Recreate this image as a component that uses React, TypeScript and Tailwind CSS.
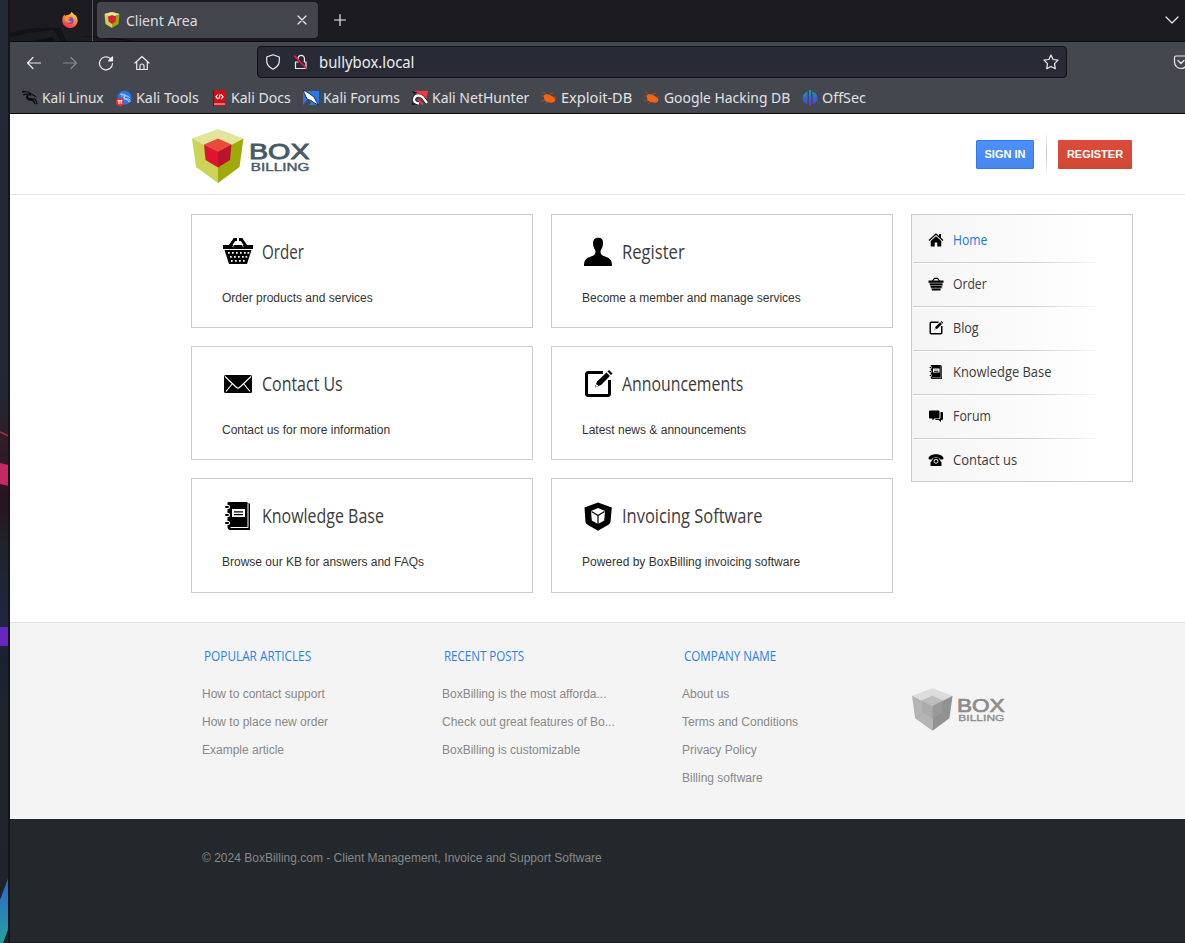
import { useLayoutEffect, useRef, useState } from "react";
import type { ReactNode } from "react";

/* Text condensed or widened horizontally so that it fills a given width. */
function Fit({ w, className = "", children }: { w: number; className?: string; children: ReactNode }) {
  const ref = useRef<HTMLSpanElement>(null);
  const [scale, setScale] = useState(1);
  useLayoutEffect(() => {
    if (ref.current) setScale(w / ref.current.offsetWidth);
  }, [w]);
  return (
    <span className="block shrink-0 whitespace-nowrap" style={{ width: w }}>
      <span ref={ref} className={"inline-block origin-left whitespace-nowrap align-top " + className} style={{ transform: `scaleX(${scale})` }}>
        {children}
      </span>
    </span>
  );
}

const glyphs: Record<string, ReactNode> = {
  basket: (
    <>
      <path d="M1 9h30v4H1zM2.500 14h27L25 28H7z" />
      <path d="M8 10 12.500 3.500h2.500M24 10l-4.500-6.500H17" fill="none" stroke="#000" strokeWidth="3" />
      <path d="M10.500 11l4.500-6M21.500 11 17 5" stroke="#fff" strokeWidth=".8" />
      <g fill="#fff">
        {[6, 10, 14, 18, 22, 25.500].map((x) => <path key={x} d={`M${x} 16h1.700v1.700h-1.700z`} />)}
        {[8, 12, 16, 20, 23.500].map((x) => <path key={x} d={`M${x} 20h1.700v1.700h-1.700z`} />)}
        {[9, 13, 17, 21].map((x) => <path key={x} d={`M${x} 24h1.700v1.700h-1.700z`} />)}
      </g>
    </>
  ),
  basketSmall: (
    <>
      <path d="M1 9h30v4.500H1zM3 15h26v3.500H4zM5 20h22v3.500H6zM7 25h18v4H8z" />
      <path d="M3 13h26v12H6z" opacity=".35" />
      <path d="M9 10 13 4.500h6l4 5.500" fill="none" stroke="#000" strokeWidth="2.500" />
    </>
  ),
  user: <path d="M12.500 3C14.500 1.300 18.500 1.600 20 3.300c1.600 1.900 1.200 5.800.2 8.200-.7 1.700-1.700 2.700-1.700 4.300 0 3 1.800 3.700 4.600 4.700C28 22.200 30 24 30 30H2c0-6 2-7.800 6.900-9.500 2.800-1 4.600-1.700 4.600-4.700 0-1.600-1-2.600-1.700-4.300C10.800 9 10.600 5 12.500 3z" />,
  mail: (
    <>
      <rect x="2" y="7" width="28" height="18" rx="1.500" />
      <path d="m3 8.500 11.500 11q1.500 1.300 3 0L29 8.500M4 23.500l6.500-8M28 23.500l-6.500-8" stroke="#fff" strokeWidth="1.100" fill="none" />
    </>
  ),
  edit: (
    <>
      <path d="M21 4.500H6.500a2 2 0 0 0-2 2v19a2 2 0 0 0 2 2h19a2 2 0 0 0 2-2V12" fill="none" stroke="#000" strokeWidth="3" />
      <path d="m13 19.500 2-6L24.500 4.500l3.500 3.500L19 17zM25.500 3.500 27 2l3.500 3.500L29 7z" />
      <path d="m13.500 19 1-3 2 2z" fill="#fff" />
    </>
  ),
  book: (
    <>
      <path d="M5.500 3Q5.500 2 6.500 2h19v1.500H28V30H7.500q-2-.5-2-3z" />
      <path d="M26 4v23.500H8.500" fill="none" stroke="#fff" strokeWidth="1" />
      <path d="M10 9h13v8H10z" fill="#fff" />
      <path d="M12 11.300h9v1.300h-9zM12 14h9v1.300h-9z" />
      {[7, 15, 23].map((y) => (
        <g key={y}>
          <rect x="3" y={y - 2} width="5" height="4" rx="1.800" fill="#fff" />
          <rect x="3" y={y - 1} width="4" height="2" rx="1" />
        </g>
      ))}
    </>
  ),
  shield: (
    <>
      <path d="M16 2.500 2.500 7.500 3.500 22Q4 24 6 25l10 5.700L26 25q2-1 2.500-3l1.300-14.500z" />
      <path d="m16 8-7 3 .8 9.500L16 24l6.200-3.500.8-9.500z" fill="#fff" />
      <path d="m9.500 11.500 6.500 4 6.500-4M16 15.500V24" fill="none" stroke="#000" strokeWidth="1.200" />
    </>
  ),
  home: (
    <>
      <path d="M16 8.500 5.500 18v11h8v-8h5v8h8V18zM22 4h4v9l-4-4z" />
      <path d="m2 17 14-13 14 13" fill="none" stroke="#000" strokeWidth="2.500" />
    </>
  ),
  forum: (
    <>
      <path d="M4 5h17q2 0 2 2v12q0 2-2 2h-8l-4 4v-4H4q-2 0-2-2V7q0-2 2-2z" />
      <path d="M25 8h3q2 0 2 2v12q0 2-2 2h-2v4l-5-4h-7l2-2h6q3 0 3-3z" />
    </>
  ),
  phone: (
    <>
      <path d="M3 15q-2 0-2-2.500C2 7 9 4.500 16 4.500S30 7 31 12.500q0 2.500-2 2.500h-4q-2 0-2-3-7-2-14 0 0 3-2 3z" />
      <path d="M11 12h10l6 9v7H5v-7z" />
      <circle cx="16" cy="18.500" r="4" fill="none" stroke="#fff" strokeWidth="1.800" />
    </>
  ),
};

function Glyph({ name, className }: { name: string; className: string }) {
  return <svg viewBox="0 0 32 32" className={"shrink-0 " + className}>{glyphs[name]}</svg>;
}

function Logo({ gray = false, className }: { gray?: boolean; className: string }) {
  const c = gray
    ? ["#dcdcdc", "#b4b4b4", "#929292", "#bdbdbd", "#ababab", "#999999", "#8c8c8c"]
    : ["#e3e69a", "#cbd457", "#9fa90b", "#e64c39", "#e21330", "#bb1329", "#465b66"];
  return (
    <svg viewBox="0 0 118 54" className={"shrink-0 " + className}>
      <path d="M26 0 0 9.500 26 23 51.500 9.500z" fill={c[0]} />
      <path d="m0 9.500 4 28.500 22 16V23z" fill={c[1]} />
      <path d="m51.500 9.500-4 28.500L26 54V23z" fill={c[2]} />
      <path d="m26 9.500-14 6L26 22.500l13.500-7z" fill={c[3]} />
      <path d="m12 15.500 1.500 15.500L26 38.500v-16z" fill={c[4]} />
      <path d="m39.500 15.500-1.500 15.500L26 38.500v-16z" fill={c[5]} />
      <g fill={c[6]} stroke={c[6]} fontFamily="Liberation Sans, sans-serif">
        <text x="57" y="30.300" fontSize="22.500" strokeWidth=".9" textLength="60.500" lengthAdjust="spacingAndGlyphs">BOX</text>
        <text x="58.800" y="41.500" fontSize="10.700" strokeWidth=".4" textLength="58.500" lengthAdjust="spacingAndGlyphs">BILLING</text>
      </g>
    </svg>
  );
}

function ShieldFavicon() {
  return (
    <svg viewBox="0 0 16 16" className="size-4 shrink-0">
      <path d="M8 0 .5 2l1 10L8 16z" fill="#cbd34f" />
      <path d="m8 0 7.500 2-1 10L8 16z" fill="#9aa60d" />
      <path d="M8 0 .5 2 8 5l7.500-3z" fill="#e5e795" />
      <path d="M8 3 4 4.500l.5 5L8 12l3.500-2.500.5-5z" fill="#dc2034" />
    </svg>
  );
}

function Firefox() {
  return (
    <svg viewBox="0 0 16 16" className="size-4 shrink-0">
      <defs>
        <linearGradient id="fx" x1=".8" y1="0" x2=".3" y2="1">
          <stop offset="0" stopColor="#ffe33d" />
          <stop offset=".45" stopColor="#ff9029" />
          <stop offset="1" stopColor="#f7235f" />
        </linearGradient>
      </defs>
      <path d="M9.300 0q2 1 3 3l.5-.4q2.900 2.500 2.900 6A7.700 7.300 0 0 1 .3 9Q0 5 2.300 2.500L3 4q1-1 2.500-1Q8.500 3 9.300 0z" fill="url(#fx)" />
      <circle cx="8" cy="8.500" r="3.600" fill="#7643e4" />
      <path d="M3 4.500q2.500-.8 3.500.8 1 .5 2 .5-.5 1.500-2.500 2 1 2 4 1-2 3-5 1.500T3 4.500z" fill="#ff9830" />
    </svg>
  );
}

const dragon = (
  <g fill="none" strokeWidth="1.300">
    <path d="M0 2q6-1.500 9 2M1 5q3-1.500 6-.5l2 1M8 3.500q-5 3-1 5 3 .5 6 .7 2 2 1.700 5M5 6q-1 4 4 4 3 0 4 4M9 4l3 1.500 2 1.500M0 2l2-1" />
  </g>
);

const favs: Record<string, ReactNode> = {
  linux: <g stroke="#0d0d0f">{dragon}</g>,
  tools: (
    <>
      <circle cx="8.500" cy="7.800" r="7" fill="#2676f0" />
      <g stroke="#c9e0ff" transform="translate(4.500 3) scale(.65)">{dragon}</g>
      <circle cx="4" cy="12" r="4" fill="#ee2e35" />
      <path d="M1.500 10.800h5M3 10.500v3.500M5.200 10.500v3.500" stroke="#fff" />
    </>
  ),
  docs: (
    <>
      <path d="M2.500 0H14v16H2.500z" fill="#d40e16" />
      <path d="M2.500 0v16" stroke="#26264f" />
      <path d="M3 13.500h11v1H3z" fill="#ddd" />
      <path d="M6.800 4.500 5 6.800l1.800 2.200M10.200 4.500 12 6.800 10.200 9M7.800 9l1.400-4.500" stroke="#fff" strokeWidth="1.200" fill="none" />
    </>
  ),
  forums: (
    <>
      <path d="M0 1h16v14H0z" fill="#2577ee" />
      <path d="M0 0 3 1.500 7 4l4 3 2 4 2.500 4-4-2L8 10.500 4 9z" fill="#fff" stroke="#111" strokeWidth=".8" />
      <path d="M0 15 5 9l3 3-2 3z" fill="#44474e" />
    </>
  ),
  nethunter: (
    <>
      <path d="M2 1h14l-2.500 11L5 6z" fill="#ff3540" />
      <path d="M7 13.500q-5-.5-5-4Q2.500 5.500 6.500 5.500q2.500 0 4.500 2l4 5.500" fill="none" stroke="#111" strokeWidth="3.500" />
      <path d="M7 13.500q-5-.5-5-4Q2.500 5.500 6.500 5.500q2.500 0 4.500 2l4 5.500" fill="none" stroke="#fff" strokeWidth="2.300" />
      <path d="m6 9.500 5 5" stroke="#e8344a" strokeWidth="2" />
      <path d="M0 1l6 1.500L2 4zM0 12v3h3z" fill="#15151a" />
    </>
  ),
  bug: (
    <>
      <path d="m2.500 6 2-2 3 .5L11 6l3.500 3-1 3-3 .8-4-.8-3-1.500z" fill="#f26414" />
      <path d="M4 3 1 2.500M8 4.500l4-1.500M3 10l-3 1M7 12l-3 1.500M0 6h3M13 7h2.500" stroke="#b95622" strokeWidth=".7" />
    </>
  ),
  offsec: (
    <>
      <defs>
        <linearGradient id="off" gradientUnits="userSpaceOnUse" x1="0" y1="0" x2="0" y2="16">
          <stop offset="0" stopColor="#10a0bd" />
          <stop offset=".5" stopColor="#3167ce" />
          <stop offset="1" stopColor="#6635d4" />
        </linearGradient>
      </defs>
      <path d="M5.500 1.500v13Q.5 12.500.5 8t5-6.500zM7 0h2v16H7zM10.500 1.500v13q5-2 5-6.500t-5-6.500z" fill="url(#off)" />
    </>
  ),
};

const bookmarks: [string, string, number, string][] = [
  ["linux", "Kali Linux", 62, "w-[94px]"],
  ["tools", "Kali Tools", 63, "w-[95px]"],
  ["docs", "Kali Docs", 60, "w-[92px]"],
  ["forums", "Kali Forums", 77, "w-[109px]"],
  ["nethunter", "Kali NetHunter", 97, "w-[129px]"],
  ["bug", "Exploit-DB", 71, "w-[103px]"],
  ["bug", "Google Hacking DB", 126, "w-[158px]"],
  ["offsec", "OffSec", 44, "w-[70px]"],
];

const line = { fill: "none", stroke: "#ececee", strokeWidth: 1.2, strokeLinecap: "round", strokeLinejoin: "round" } as const;

function Browser() {
  return (
    <div className="h-[114px] w-full overflow-hidden border-b border-[#08080c] bg-[#44474e] font-['Noto_Sans',sans-serif] text-[#ececee]">
      <div className="relative flex h-[42px] border-b border-[#0e0e12] bg-[#1b1b20]">
        <svg className="absolute left-0 top-0 h-[41px] w-40" viewBox="0 0 160 41">
          <path d="M0 33Q20 27 50 28l7 14H0z" fill="#121217" />
          <path d="M0 37q20-5 44-7l7 12H0z" fill="#1a1a1f" />
          <path d="m18 42 24-5 4 5zM70 36q30 0 60 6" fill="#101014" />
        </svg>
        <div className="relative flex w-[83px] items-center border-r border-[#56565b] pl-[52px] pb-px"><Firefox /></div>
        <div className="relative ml-1 mt-[2px] flex h-9 w-[221px] items-center rounded-[4px] bg-[#42454c] pl-[7px] shadow-sm">
          <ShieldFavicon />
          <div className="ml-[6px] w-[170px] pt-px text-[15px] text-[#dedee0]"><Fit w={72}>Client Area</Fit></div>
          <svg viewBox="0 0 12 12" className="size-3" {...line}><path d="m2 2 8 8M10 2l-8 8" /></svg>
        </div>
        <svg viewBox="0 0 14 14" className="ml-[15px] mt-[13px] size-[14px]" {...line}><path d="M7 1.500v11M1.500 7h11" /></svg>
        <svg viewBox="0 0 14 10" className="ml-auto mr-[6px] mt-[15px] h-[10px] w-[14px]" {...line}><path d="m1 2 6 6 6-6" /></svg>
      </div>
      <div className="flex h-10 items-center">
        <svg viewBox="0 0 16 16" className="ml-4 mt-px size-4 shrink-0" {...line}><path d="M1.500 8h13M7 2.500 1.500 8 7 13.500" /></svg>
        <svg viewBox="0 0 16 16" className="ml-5 mt-px size-4 shrink-0 opacity-40" {...line}><path d="M1.500 8h13M9 2.500 14.500 8 9 13.500" /></svg>
        <svg viewBox="0 0 16 16" className="ml-5 mt-px size-4 shrink-0" {...line}><path d="M14.500 8.700A6.500 6.500 0 1 1 12 3.200L14 5" /><path d="M14.500 2v4h-4z" fill="#f4f4f6" /></svg>
        <svg viewBox="0 0 16 16" className="ml-5 mt-px size-4 shrink-0" {...line}><path d="m1 8 7-6.500L15 8M2.700 7v7.500h10.600V7M6 14v-3.500q0-1.500 2-1.500t2 1.500V14" /></svg>
        <div className="ml-[107px] flex h-8 w-[810px] shrink-0 items-center rounded-[4px] border border-[#101016] bg-[#282a36] pl-[7px]">
          <svg viewBox="0 0 16 16" className="size-4" {...line}><path d="M8 .8 14.300 3v4q0 5-6.300 8.300Q1.700 12 1.700 7V3z" /></svg>
          <svg viewBox="0 0 16 16" className="ml-3 size-4" {...line}>
            <path d="M5 5V4.500a3.200 3.200 0 0 1 6.400 0V8H13v6.500H2.500V8H5" />
            <path d="m1.500 2 12 12.500" stroke="#f5174d" strokeWidth="1.500" />
          </svg>
          <div className="ml-[10px] pt-[2px] text-[15.500px]"><Fit w={95}>bullybox.local</Fit></div>
          <svg viewBox="0 0 16 16" className="ml-auto mr-[7px] size-4" {...line}><path d="m8 1 2.100 4.500 4.900.7-3.500 3.500.8 5L8 12.500l-4.300 2.200.8-5L1 6.200l4.900-.7z" /></svg>
        </div>
        <svg viewBox="0 0 16 16" className="ml-[106px] size-4 shrink-0" {...line}><path d="M3 2h10q1.500 0 1.500 1.500V8a6.500 6.500 0 0 1-13 0V3.500Q1.500 2 3 2zM5 6.500l3 3 3-3" /></svg>
      </div>
      <div className="flex h-[31px] items-center pl-3">
        {bookmarks.map(([icon, label, w, box]) => (
          <div key={label} className={"flex shrink-0 items-center text-[15px] text-[#e2e2e5] " + box}>
            <svg viewBox="0 0 16 16" className="mr-1 size-4 shrink-0">{favs[icon]}</svg>
            <Fit w={w}>{label}</Fit>
          </div>
        ))}
      </div>
    </div>
  );
}

const cards: [string, string, number, string][] = [
  ["basket", "Order", 42, "Order products and services"],
  ["user", "Register", 63, "Become a member and manage services"],
  ["mail", "Contact Us", 81, "Contact us for more information"],
  ["edit", "Announcements", 121, "Latest news & announcements"],
  ["book", "Knowledge Base", 122, "Browse our KB for answers and FAQs"],
  ["shield", "Invoicing Software", 140, "Powered by BoxBilling invoicing software"],
];

const menu: [string, string, number][] = [
  ["home", "Home", 34],
  ["basketSmall", "Order", 34],
  ["edit", "Blog", 26],
  ["book", "Knowledge Base", 98],
  ["forum", "Forum", 38],
  ["phone", "Contact us", 64],
];

const footer: [string, number, string[]][] = [
  ["POPULAR ARTICLES", 107, ["How to contact support", "How to place new order", "Example article"]],
  ["RECENT POSTS", 80, ["BoxBilling is the most afforda...", "Check out great features of Bo...", "BoxBilling is customizable"]],
  ["COMPANY NAME", 92, ["About us", "Terms and Conditions", "Privacy Policy", "Billing software"]],
];

function Desktop() {
  return (
    <svg viewBox="0 0 10 943" className="h-[943px] w-[10px] shrink-0">
      <defs>
        <linearGradient id="desk" x1="0" y1="0" x2="0" y2="1">
          <stop offset="0" stopColor="#252936" />
          <stop offset=".42" stopColor="#242633" />
          <stop offset=".47" stopColor="#321c28" />
          <stop offset=".53" stopColor="#29131e" />
          <stop offset=".58" stopColor="#20232b" />
          <stop offset=".66" stopColor="#202642" />
          <stop offset=".7" stopColor="#182033" />
          <stop offset=".75" stopColor="#20242d" />
          <stop offset="1" stopColor="#20232b" />
        </linearGradient>
        <linearGradient id="tail" x1="0" y1="0" x2="0" y2="1">
          <stop offset="0" stopColor="#3160ce" />
          <stop offset="1" stopColor="#22a3a0" />
        </linearGradient>
      </defs>
      <path d="M0 0h10v943H0z" fill="url(#desk)" />
      <path d="m0 432 9 4" stroke="#a83140" strokeWidth="1.500" />
      <path d="m0 463 9 2v21l-9-2z" fill="#c62962" />
      <path d="M0 627h9v19H0z" fill="#6925bf" />
      <path d="m9 876-9 24v43h3l6-16z" fill="url(#tail)" />
      <path d="M8 0h2v943H8z" fill="#14151b" />
    </svg>
  );
}

export default function App() {
  return (
    <div className="flex h-[943px] w-[1185px] overflow-hidden bg-white font-['Liberation_Sans',sans-serif] text-[12px] text-[#333]">
      <Desktop />
      <div className="flex w-[1175px] shrink-0 flex-col">
        <Browser />
        <header className="flex h-[81px] shrink-0 items-start border-b border-[#e2e2e2] pl-[182px]">
          <Logo className="mt-[15px] h-[54px] w-[118px]" />
          <div className="ml-auto mr-[53px] flex items-center pt-5 text-[11px] font-bold text-white">
            <button className="h-[29px] w-[58px] rounded-[1px] border border-[#3079ed] bg-linear-to-b from-[#4d90fe] to-[#4787ed]">SIGN IN</button>
            <span className="-my-1 ml-3 h-12 w-px bg-linear-to-b from-white via-[#c8c8c8] to-white" />
            <button className="ml-[11px] h-[29px] w-[74px] rounded-[1px] bg-linear-to-b from-[#dd4b39] to-[#d14836]">REGISTER</button>
          </div>
        </header>
        <main className="flex h-[427px] shrink-0 items-start pl-[181px] pt-[19px]">
          <div className="grid w-[702px] grid-cols-2 grid-rows-[114px_114px_115px] gap-[18px]">
            {cards.map(([icon, title, w, text]) => (
              <section key={title} className="border border-[#cccccc] pl-[30px] pt-[21px]">
                <div className="flex h-8 items-center">
                  <Glyph name={icon} className="size-8" />
                  <div className="ml-2 font-['Open_Sans',sans-serif] text-[19.500px] leading-8 text-[#3b3b3b]"><Fit w={w}>{title}</Fit></div>
                </div>
                <p className="mt-[21px] leading-[18px]">{text}</p>
              </section>
            ))}
          </div>
          <nav className="ml-[18px] flex h-[268px] w-[222px] flex-col border border-[#cccccc] bg-linear-to-r from-[#f5f5f5] to-white to-85% pt-1">
            {menu.map(([icon, label, w], i) => (
              <div key={label} className="h-11 shrink-0">
                <a className="flex h-[43px] items-center pb-px pl-4">
                  <Glyph name={icon} className="size-4" />
                  <div className={"ml-[9px] pb-[2px] font-['Open_Sans',sans-serif] text-[15px] font-medium " + (i === 0 ? "text-[#1a78ea]" : "text-[#3b3b3b]")}><Fit w={w}>{label}</Fit></div>
                </a>
                {i < 5 && <div className="ml-px h-[2px] w-[190px] border-b border-white bg-linear-to-r from-[#cccccc] from-60% to-transparent" />}
              </div>
            ))}
          </nav>
        </main>
        <footer className="flex h-[197px] shrink-0 border-t border-b border-t-[#e2e2e2] border-b-white bg-[#f4f4f4] pl-[192px] text-[#888]">
          {footer.map(([title, w, links]) => (
            <div key={title} className="w-[240px] shrink-0 pt-[21px]">
              <h2 className="ml-[2px] font-['Open_Sans',sans-serif] text-[15px] leading-[22px] text-[#2583e9]"><Fit w={w}>{title}</Fit></h2>
              <ul className="mt-[14px]">
                {links.map((l) => <li key={l} className="h-7 leading-7">{l}</li>)}
              </ul>
            </div>
          ))}
          <Logo gray className="-ml-[10px] mt-[65px] h-[43px] w-[93px]" />
        </footer>
        <div className="grow border-b border-[#1b1b20] bg-[#22282b] pl-[192px] pt-[29px] leading-5 text-[#888]">
          © 2024 BoxBilling.com - Client Management, Invoice and Support Software
        </div>
      </div>
    </div>
  );
}
